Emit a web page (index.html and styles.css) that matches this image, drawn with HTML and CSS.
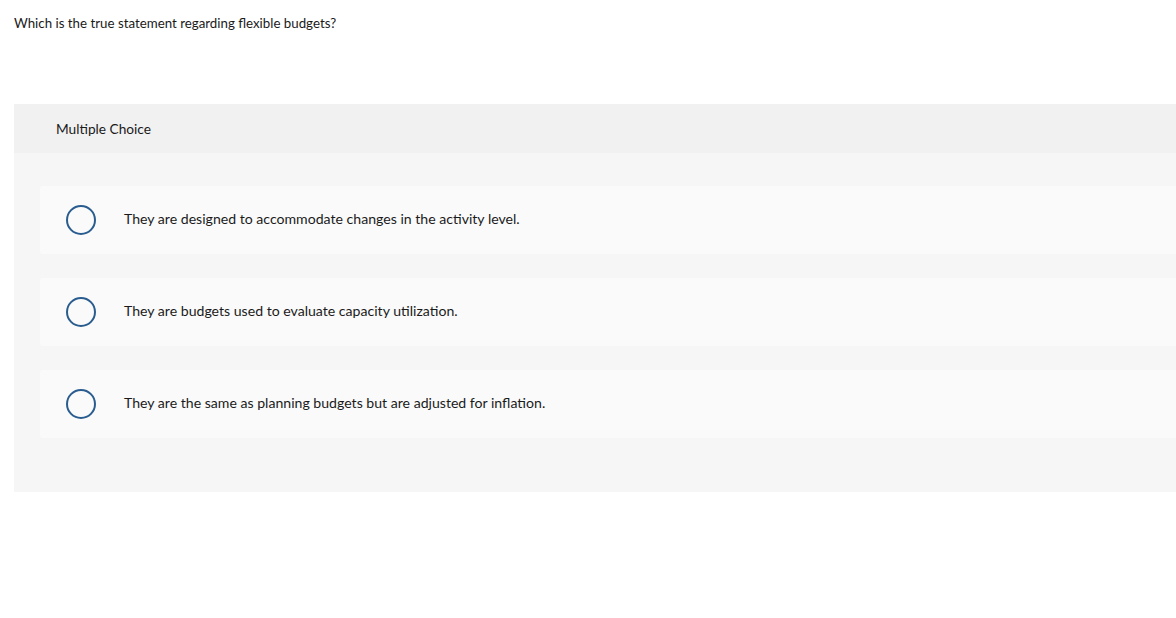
FILE: index.html
```html
<!DOCTYPE html>
<html>
<head>
<meta charset="utf-8">
<link rel="stylesheet" href="styles.css">
</head>
<body>
<p class="question">Which is the true statement regarding flexible budgets?</p>
<section class="panel">
  <div class="panel-head">Multiple Choice</div>
  <div class="panel-body">
    <label class="option"><span class="radio"></span><span class="opt-text">They are designed to accommodate changes in the activity level.</span></label>
    <label class="option"><span class="radio"></span><span class="opt-text">They are budgets used to evaluate capacity utilization.</span></label>
    <label class="option"><span class="radio"></span><span class="opt-text">They are the same as planning budgets but are adjusted for inflation.</span></label>
  </div>
</section>
</body>
</html>
```
FILE: styles.css
```css
html, body { margin: 0; padding: 0; background: #fff; overflow: hidden; }
body {
  font-family: "Lato", "Liberation Sans", sans-serif;
  color: #1a1a1a;
  font-size: 13px;
}
.question {
  margin: 0;
  padding: 15px 0 0 14px;
  font-size: 13.3px;
  line-height: 16px;
  height: 89px;
}
.panel {
  margin-left: 14px;
}
.panel-head {
  background: #f1f1f1;
  height: 49px;
  line-height: 50px;
  padding-left: 42px;
  font-size: 13.7px;
}
.panel-body {
  background: #f6f6f6;
  padding: 33px 0 54px 26px;
  display: flex;
  flex-direction: column;
  gap: 24px;
}
.option {
  background: #fafafa;
  height: 68px;
  display: flex;
  align-items: center;
  border-radius: 3px 0 0 3px;
}
.radio {
  box-sizing: border-box;
  width: 30px;
  height: 30px;
  border: 2px solid #2a5d8f;
  border-radius: 50%;
  margin-left: 26px;
  flex: none;
}
.opt-text {
  margin-left: 28px;
  font-size: 14.1px;
  line-height: 16px;
  margin-top: -2px;
}
```
